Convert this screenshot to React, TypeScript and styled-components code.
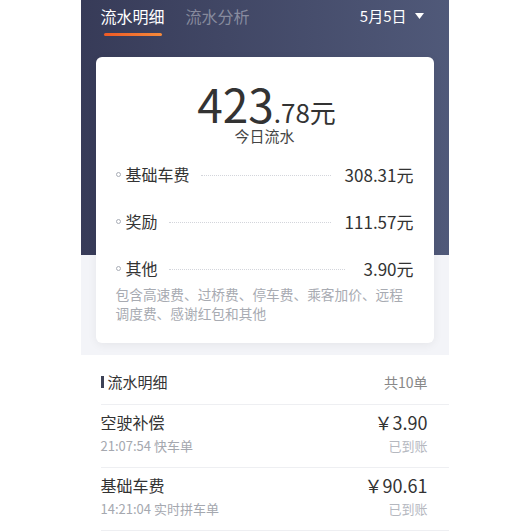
import React from "react";
import styled, { createGlobalStyle } from "styled-components";

const GlobalStyle = createGlobalStyle`
  html, body {
    margin: 0;
    padding: 0;
    background: #ffffff;
    overflow: hidden;
  }
  body {
    font-family: "Noto Sans CJK SC", "Noto Sans", sans-serif;
    color: #333333;
  }
`;

const Phone = styled.div`
  width: 368px;
  margin: 0 auto;
  background: #ffffff;
`;

// 상단: 어두운 그라데이션 + 아래쪽 회색 바탕
const Top = styled.div`
  background: linear-gradient(90deg, #373b58 0%, #505979 100%) top / 100% 255px
      no-repeat,
    #f3f4f8;
  padding: 5px 15px 12px;
`;

const TabBar = styled.div`
  display: flex;
  align-items: flex-start;
  padding: 0 10px 0 5px;
`;

const Tab = styled.div<{ $active?: boolean }>`
  display: flex;
  flex-direction: column;
  align-items: center;
  margin-right: 21px;
  font-size: 16px;
  line-height: 22px;
  color: ${({ $active }) => ($active ? "#ffffff" : "rgba(255,255,255,0.38)")};
`;

const TabLine = styled.span`
  display: block;
  width: 58px;
  height: 3px;
  margin-top: 6px;
  border-radius: 2px;
  background: linear-gradient(90deg, #ef5a25, #f68a3b);
`;

const DatePick = styled.div`
  margin-left: auto;
  display: flex;
  align-items: center;
  gap: 8px;
  font-size: 15px;
  line-height: 22px;
  color: #ffffff;
`;

const Card = styled.section`
  margin-top: 21px;
  background: #ffffff;
  border-radius: 6px;
  box-shadow: 0 2px 10px rgba(0, 0, 0, 0.06);
  padding: 26px 20px 20px;
`;

const Total = styled.div`
  text-align: center;
  font-size: 46px;
  line-height: 40px;
  color: #333333;
  padding-left: 4px;
`;

const Cents = styled.span`
  font-size: 26px;
  line-height: 0;
`;

const TotalLabel = styled.div`
  margin-top: 4px;
  text-align: center;
  font-size: 15px;
  line-height: 18px;
  color: #444444;
`;

const Rows = styled.div`
  display: flex;
  flex-direction: column;
  gap: 23px;
  margin-top: 17px;
`;

const Row = styled.div`
  display: flex;
  align-items: center;
  height: 24px;
`;

const Dot = styled.span`
  width: 3px;
  height: 3px;
  border: 1px solid #a9adb6;
  border-radius: 50%;
  margin-right: 5px;
`;

const RowLabel = styled.span`
  font-size: 16px;
  color: #333333;
`;

const Dots = styled.span<{ $gap: number }>`
  flex: 1;
  margin: 2px ${({ $gap }) => $gap}px 0 11px;
  border-top: 1px dotted #d3d5db;
`;

const RowValue = styled.span`
  font-size: 17px;
  color: #333333;
`;

const Note = styled.p`
  margin: 5px 0 0;
  font-size: 13.7px;
  line-height: 19px;
  color: #a8abb2;
`;

const ListHead = styled.div`
  display: flex;
  align-items: center;
  justify-content: space-between;
  padding: 17px 21px 12px 20px;
`;

const HeadTitle = styled.div`
  display: flex;
  align-items: center;
  font-size: 15px;
  line-height: 20px;
  color: #333333;

  &::before {
    content: "";
    width: 3px;
    height: 12px;
    margin-right: 4px;
    background: #3d4256;
  }
`;

const HeadCount = styled.span`
  font-size: 14px;
  color: #888888;
`;

const Item = styled.div`
  margin-left: 20px;
  padding: 6px 21px 12px 0;
  border-top: 1px solid #eeeff2;
  display: grid;
  grid-template-columns: 1fr auto;
  row-gap: 4px;

  &:last-child {
    border-bottom: 1px solid #eeeff2;
  }
`;

const ItemTitle = styled.span`
  font-size: 16px;
  line-height: 22px;
  color: #333333;
`;

const ItemAmount = styled.span`
  font-size: 18px;
  line-height: 22px;
  color: #333333;
  text-align: right;
`;

const ItemSub = styled.span<{ $right?: boolean }>`
  font-size: 13px;
  line-height: 18px;
  color: ${({ $right }) => ($right ? "#b5b8bf" : "#a5a8af")};
  text-align: ${({ $right }) => ($right ? "right" : "left")};
`;

const breakdown = [
  { label: "基础车费", value: "308.31元", gap: 14 },
  { label: "奖励", value: "111.57元", gap: 14 },
  { label: "其他", value: "3.90元", gap: 18 },
];

const items = [
  { title: "空驶补偿", amount: "￥3.90", sub: "21:07:54 快车单" },
  { title: "基础车费", amount: "￥90.61", sub: "14:21:04 实时拼车单" },
];

export default function App() {
  return (
    <>
      <GlobalStyle />
      <Phone>
        <Top>
          <TabBar>
            <Tab $active>
              流水明细
              <TabLine />
            </Tab>
            <Tab>流水分析</Tab>
            <DatePick>
              5月5日
              <svg width="9" height="6" viewBox="0 0 9 6">
                <path d="M0 0 H9 L4.5 6 Z" fill="#ffffff" />
              </svg>
            </DatePick>
          </TabBar>

          <Card>
            <Total>
              423<Cents>.78元</Cents>
            </Total>
            <TotalLabel>今日流水</TotalLabel>
            <Rows>
              {breakdown.map((r) => (
                <Row key={r.label}>
                  <Dot />
                  <RowLabel>{r.label}</RowLabel>
                  <Dots $gap={r.gap} />
                  <RowValue>{r.value}</RowValue>
                </Row>
              ))}
            </Rows>
            <Note>包含高速费、过桥费、停车费、乘客加价、远程调度费、感谢红包和其他</Note>
          </Card>
        </Top>

        <ListHead>
          <HeadTitle>流水明细</HeadTitle>
          <HeadCount>共10单</HeadCount>
        </ListHead>
        {items.map((it) => (
          <Item key={it.title}>
            <ItemTitle>{it.title}</ItemTitle>
            <ItemAmount>{it.amount}</ItemAmount>
            <ItemSub>{it.sub}</ItemSub>
            <ItemSub $right>已到账</ItemSub>
          </Item>
        ))}
      </Phone>
    </>
  );
}
